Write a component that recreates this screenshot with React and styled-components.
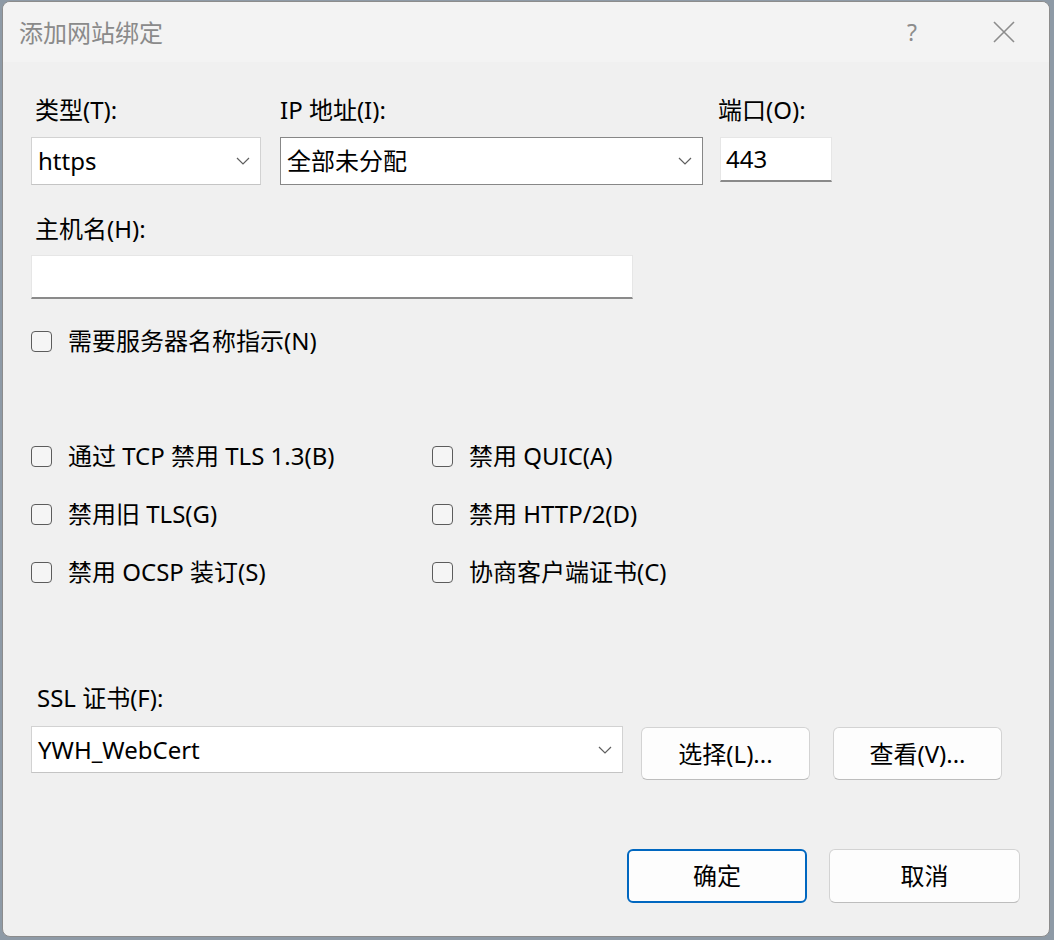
import React from "react";
import styled, { createGlobalStyle } from "styled-components";

const GlobalStyle = createGlobalStyle`
  html, body {
    margin: 0;
    padding: 0;
    background: #8e9aa6;
  }
  body {
    font-family: "Noto Sans", "Noto Sans CJK SC", sans-serif;
    font-size: 24px;
    color: #000;
  }
  * { box-sizing: border-box; }
`;

const Window = styled.div`
  margin: 1px 0 0 2px;
  width: 1048px;
  height: 936px;
  border: 1px solid #8c8c8c;
  border-radius: 8px;
  overflow: hidden;
  background: #f0f0f0;
  display: flex;
  flex-direction: column;
`;

const TitleBar = styled.div`
  height: 60px;
  flex: none;
  background: #f3f3f3;
  display: flex;
  align-items: center;
  padding-left: 16px;
`;

const Title = styled.div`
  flex: 1;
  color: #8a8a8a;
  font-size: 24px;
  font-family: "Noto Sans CJK SC", sans-serif;
  margin-top: -2px;
`;

const CaptionButton = styled.div`
  width: ${(p) => p.$w}px;
  height: 60px;
  display: flex;
  align-items: center;
  justify-content: center;
  color: #8c8c8c;
  font-size: 23px;
`;

const Body = styled.div`
  flex: 1;
  display: flex;
  flex-direction: column;
  padding: 34px 29px 33px 28px;
`;

const Row = styled.div`
  display: flex;
  gap: ${(p) => p.$gap || 0}px;
  margin-top: ${(p) => p.$mt || 0}px;
  align-items: flex-start;
`;

const Field = styled.div`
  display: flex;
  flex-direction: column;
  width: ${(p) => p.$w}px;
  margin-left: ${(p) => p.$ml || 0}px;
`;

const Label = styled.div`
  height: 30px;
  line-height: 28px;
  margin-left: ${(p) => p.$indent || 0}px;
  margin-bottom: ${(p) => p.$mb || 11}px;
  white-space: nowrap;
`;

const Combo = styled.div`
  height: ${(p) => p.$h || 48}px;
  background: #fff;
  border: 1px solid ${(p) => (p.$focus ? "#878787" : "#d2d2d2")};
  border-bottom-color: ${(p) => (p.$focus ? "#878787" : "#c4c4c4")};
  display: flex;
  align-items: center;
  padding: 0 10px 0 6px;
  justify-content: space-between;
  line-height: 1;
`;

const TextBox = styled.div`
  height: ${(p) => p.$h}px;
  background: #fff;
  border: 1px solid #e6e6e6;
  border-bottom: 2px solid #8a8a8a;
  display: flex;
  align-items: center;
  padding-left: 5px;
  line-height: 1;
`;

const CheckRow = styled.label`
  height: 30px;
  display: flex;
  align-items: center;
  gap: 16px;
  white-space: nowrap;
  line-height: 1;
`;

const Box = styled.span`
  width: 21px;
  height: 21px;
  border: 1px solid #5c5c5c;
  border-radius: 4px;
  background: #f5f5f5;
  flex: none;
`;

const CheckGrid = styled.div`
  display: grid;
  grid-template-columns: 401px 1fr;
  row-gap: 28px;
  margin-top: 85px;
`;

const Button = styled.div`
  width: ${(p) => p.$w}px;
  height: ${(p) => p.$h || 54}px;
  margin-top: ${(p) => p.$mt || 0}px;
  margin-left: ${(p) => p.$ml || 0}px;
  background: #fdfdfd;
  border: ${(p) => (p.$primary ? "2px solid #0067c0" : "1px solid #d3d3d3")};
  border-bottom-color: ${(p) => (p.$primary ? "#0067c0" : "#bdbdbd")};
  border-radius: 6px;
  display: flex;
  align-items: center;
  justify-content: center;
  font-size: 24px;
  line-height: 1;
`;

const Footer = styled.div`
  margin-top: auto;
  display: flex;
  justify-content: flex-end;
  gap: 22px;
`;

const Chevron = () => (
  <svg width="14" height="8" viewBox="0 0 14 8">
    <polyline points="1,1 7,7 13,1" fill="none" stroke="#5f5f5f" strokeWidth="1.2" />
  </svg>
);

const Close = () => (
  <svg width="22" height="22" viewBox="0 0 22 22">
    <path d="M1 1 L21 21 M21 1 L1 21" stroke="#8c8c8c" strokeWidth="1.6" />
  </svg>
);

const Check = ({ children }) => (
  <CheckRow>
    <Box />
    <span>{children}</span>
  </CheckRow>
);

export default function App() {
  return (
    <>
      <GlobalStyle />
      <Window>
        <TitleBar>
          <Title>添加网站绑定</Title>
          <CaptionButton $w={94}>?</CaptionButton>
          <CaptionButton $w={90}>
            <Close />
          </CaptionButton>
        </TitleBar>
        <Body>
          <Row>
            <Field $w={230}>
              <Label $indent={4}>类型(T):</Label>
              <Combo>
                <span>https</span>
                <Chevron />
              </Combo>
            </Field>
            <Field $w={423} $ml={19}>
              <Label>IP 地址(I):</Label>
              <Combo $focus>
                <span>全部未分配</span>
                <Chevron />
              </Combo>
            </Field>
            <Field $w={112} $ml={17}>
              <Label $indent={-2}>端口(O):</Label>
              <TextBox $h={45}>443</TextBox>
            </Field>
          </Row>

          <Row $mt={30}>
            <Field $w={602}>
              <Label $indent={4} $mb={10}>主机名(H):</Label>
              <TextBox $h={44} />
            </Field>
          </Row>

          <Row $mt={27}>
            <Check>需要服务器名称指示(N)</Check>
          </Row>

          <CheckGrid>
            <Check>通过 TCP 禁用 TLS 1.3(B)</Check>
            <Check>禁用 QUIC(A)</Check>
            <Check>禁用旧 TLS(G)</Check>
            <Check>禁用 HTTP/2(D)</Check>
            <Check>禁用 OCSP 装订(S)</Check>
            <Check>协商客户端证书(C)</Check>
          </CheckGrid>

          <Row $mt={97} $gap={18}>
            <Field $w={592}>
              <Label $indent={6} $mb={12}>SSL 证书(F):</Label>
              <Combo $h={47}>
                <span>YWH_WebCert</span>
                <Chevron />
              </Combo>
            </Field>
            <Button $w={169} $h={53} $mt={43}>选择(L)...</Button>
            <Button $w={169} $h={53} $mt={43} $ml={5}>查看(V)...</Button>
          </Row>

          <Footer>
            <Button $w={180} $primary>确定</Button>
            <Button $w={191}>取消</Button>
          </Footer>
        </Body>
      </Window>
    </>
  );
}
